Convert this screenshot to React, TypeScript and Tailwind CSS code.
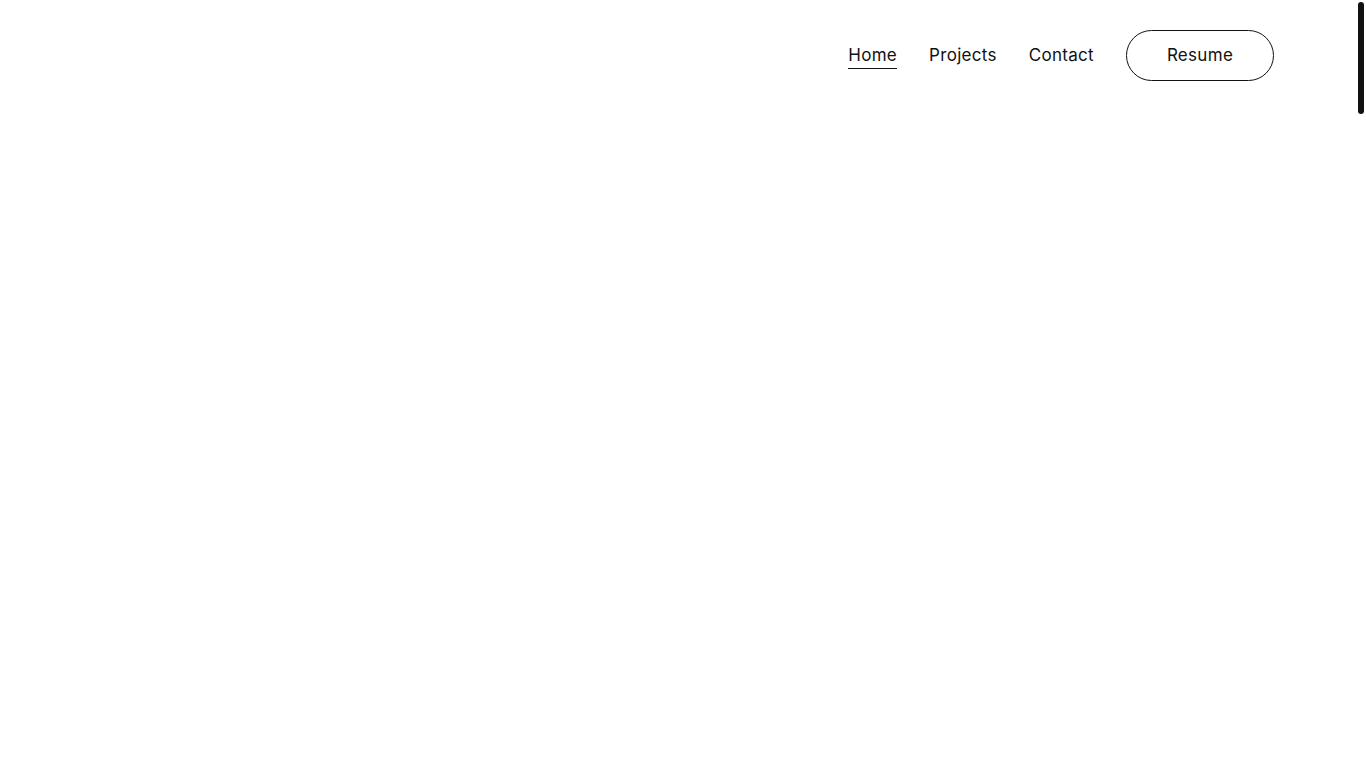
import React from 'react';

const links = ['Home', 'Projects', 'Contact'];

export default function App() {
  return (
    <div
      className="relative min-h-screen bg-white text-[#111]"
      style={{ fontFamily: 'Inter, "Noto Sans", sans-serif' }}
    >
      <header className="flex items-center justify-end pt-[30px] pr-[92px]">
        <nav className="flex items-center gap-8">
          {links.map((l, i) => (
            <a
              key={l}
              href="#"
              className={`text-[17px] leading-[26px] tracking-[0.3px] ${i === 0 ? 'border-b border-[#111]' : 'border-b border-transparent'}`}
            >
              {l}
            </a>
          ))}
          <button className="h-[51px] w-[148px] rounded-full border border-[#111] text-[17px] tracking-[0.3px]">
            Resume
          </button>
        </nav>
      </header>
      {/* scroll indicator */}
      <div className="fixed right-[2px] top-[2px] h-[112px] w-[6px] rounded-full bg-[#111]" />
    </div>
  );
}
